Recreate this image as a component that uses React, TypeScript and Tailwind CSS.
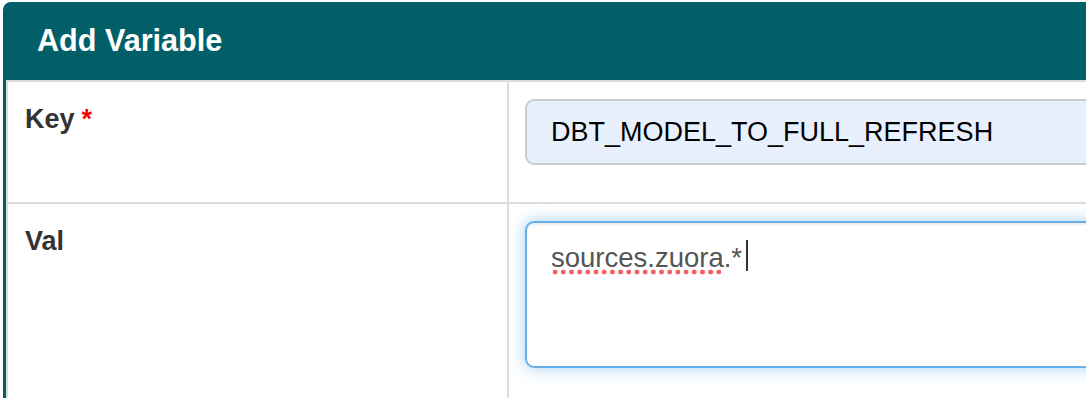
const teal = 'bg-[#025f67]'

const Label = ({ text, required }: { text: string; required?: boolean }) => (
  <div className="box-border w-[501px] shrink-0 border-r-2 border-[#dddddd] px-[17px] pt-[18px] text-[27px] leading-[38px] font-bold text-[#333333]">
    {text}
    {required && <span className="ml-[7px] text-[#ff0000]">*</span>}
  </div>
)

export default function App() {
  return (
    <div className="h-[398px] w-[1086px] overflow-hidden bg-white pt-[2px] pl-[3px] font-['Liberation_Sans',Arial,sans-serif]">
      <div className={`w-[1400px] rounded-tl-[8px] pl-[3px] ${teal}`}>
        <div className="flex h-[78px] items-center pl-[31px] text-[30.6px] font-bold text-white">
          Add Variable
        </div>

        <div className="border-t-2 border-l-2 border-[#dddddd] bg-white">
          {/* key row */}
          <div className="flex border-b-2 border-[#dddddd]">
            <Label text="Key" required />
            <div className="flex-1 pt-[17px] pb-[37px] pl-4">
              <div className="box-border flex h-[66px] items-center rounded-[9px] border-2 border-[#cccccc] bg-[#e8f0fe] pl-6 text-[27px] text-black">
                DBT_MODEL_TO_FULL_REFRESH
              </div>
            </div>
          </div>

          {/* val row */}
          <div className="flex h-[200px]">
            <Label text="Val" />
            <div className="flex-1 pt-[17px] pl-4">
              <div className="box-border h-[147px] rounded-[9px] border-2 border-[#66afe9] px-6 pt-[13px] text-[27.5px] leading-[38px] text-[#555555] shadow-[inset_0_2px_2px_rgba(0,0,0,0.075),0_0_16px_rgba(102,175,233,0.6)]">
                <span className="bg-[radial-gradient(circle,#f25f5f_2.2px,transparent_2.7px)] bg-[length:8.2px_6px] bg-[position:0_100%] bg-repeat-x pb-[2px]">
                  sources.zuora
                </span>
                <span>.*</span>
                <span className="ml-[4px] inline-block h-[31px] w-[2px] translate-y-[4px] bg-[#333333]" />
              </div>
            </div>
          </div>
        </div>
      </div>
    </div>
  )
}
